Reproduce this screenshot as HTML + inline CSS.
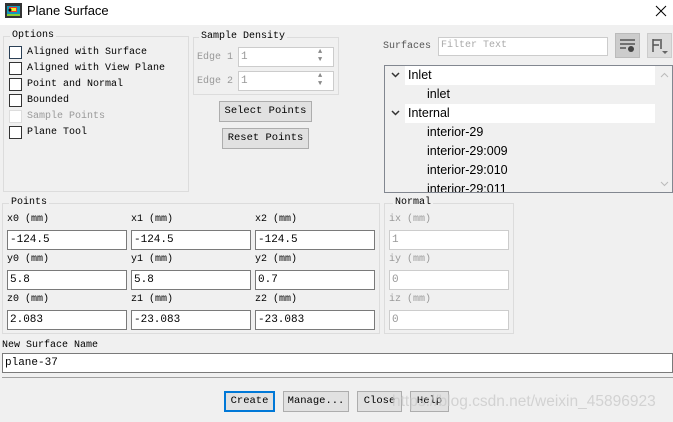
<!DOCTYPE html>
<html><head><style>
*{margin:0;padding:0;box-sizing:border-box}
body{width:673px;height:422px;background:#f0f0f0;position:relative;overflow:hidden;font-family:"Liberation Mono","Noto Sans CJK SC",monospace;font-size:10px;color:#000}
.a{position:absolute}
.tb{left:0;top:0;width:673px;height:25px;background:#fff}
.grp{position:absolute;border:1px solid #dcdcdc}
.lg{position:absolute;background:#f0f0f0;padding:0 2px;top:-7px;left:6px;line-height:12px}
.cb{position:absolute;width:13px;height:13px;border:1px solid #333;background:#fff}
.inp{position:absolute;background:#fff;border:1px solid #7a7a7a;height:20px;line-height:18px;padding-left:2px;font-size:11px}
.dis{border-color:#ccc;color:#999}
.btn{position:absolute;border:1px solid #adadad;background:#e1e1e1;text-align:center;line-height:18px;font-size:10.5px}
.row{position:absolute;left:0;width:270px;height:19px;line-height:19px;font-family:"Liberation Sans",sans-serif;font-size:12.5px}
</style></head><body>
<div class="a tb"></div>
<svg class="a" style="left:5px;top:3px" width="17" height="15"><rect x="0" y="0" width="17" height="15" fill="#333"/><rect x="2" y="3" width="13" height="8" fill="#19b"/><rect x="4" y="4" width="8" height="5" fill="#e33"/><rect x="6" y="5" width="5" height="3" fill="#ee2"/><circle cx="5" cy="7" r="1.5" fill="#111"/><rect x="2" y="11" width="13" height="2" fill="#8c3"/></svg>
<div class="a" style="left:27px;top:3px;font-family:'Liberation Sans',sans-serif;font-size:13px">Plane Surface</div>
<svg class="a" style="left:655px;top:5px" width="12" height="12"><path d="M1 1L11 11M11 1L1 11" stroke="#000" stroke-width="1"/></svg>

<div class="grp" style="left:3px;top:36px;width:186px;height:156px"><span class="lg">Options</span></div>
<div class="cb" style="left:9px;top:46px;border-color:#2a3f55"></div><div class="a" style="left:27px;top:47px">Aligned with Surface</div>
<div class="cb" style="left:9px;top:62px"></div><div class="a" style="left:27px;top:63px">Aligned with View Plane</div>
<div class="cb" style="left:9px;top:78px"></div><div class="a" style="left:27px;top:79px">Point and Normal</div>
<div class="cb" style="left:9px;top:94px"></div><div class="a" style="left:27px;top:95px">Bounded</div>
<div class="cb" style="left:9px;top:110px;border-color:#ddd"></div><div class="a" style="left:27px;top:111px;color:#999">Sample Points</div>
<div class="cb" style="left:9px;top:126px"></div><div class="a" style="left:27px;top:127px">Plane Tool</div>

<div class="grp" style="left:193px;top:37px;width:146px;height:58px"><span class="lg" style="left:5px">Sample Density</span></div>
<div class="a" style="left:197px;top:52px;color:#999">Edge 1</div>
<div class="inp dis" style="left:238px;top:47px;width:96px;height:20px">1</div>
<div class="a" style="left:318px;top:48px;color:#888;font-size:7px;line-height:8px">▲<br>▼</div>
<div class="a" style="left:197px;top:76px;color:#999">Edge 2</div>
<div class="inp dis" style="left:238px;top:71px;width:96px;height:20px">1</div>
<div class="a" style="left:318px;top:72px;color:#888;font-size:7px;line-height:8px">▲<br>▼</div>
<div class="btn" style="left:219px;top:101px;width:93px;height:21px">Select Points</div>
<div class="btn" style="left:222px;top:128px;width:87px;height:21px">Reset Points</div>

<div class="a" style="left:383px;top:41px;color:#555">Surfaces</div>
<div class="inp" style="left:438px;top:37px;width:170px;height:19px;line-height:16px;color:#aaa;font-size:10px;border-color:#ccc">Filter Text</div>
<div class="a" style="left:615px;top:33px;width:25px;height:25px;background:#ccc;border:1px solid #bbb"></div>
<svg class="a" style="left:618px;top:37px" width="20" height="18"><path d="M2 3H17M2 7H17M2 11H8" stroke="#555" stroke-width="1.5"/><circle cx="13" cy="12" r="3" fill="#444"/></svg>
<div class="a" style="left:647px;top:33px;width:25px;height:25px;background:#ddd;border:1px solid #ccc"></div>
<svg class="a" style="left:650px;top:37px" width="20" height="18"><path d="M3 2V15M3 3H10M3 8H9M11 2V12" stroke="#555" stroke-width="1.5" fill="none"/><path d="M12 14H18L15 17Z" fill="#666"/></svg>

<div class="a" style="left:384px;top:65px;width:289px;height:128px;border:1px solid #828790;background:#f0f0f0;overflow:hidden">
<div class="row" style="top:0;background:#fff;left:20px;padding-left:3px;width:250px">Inlet</div>
<svg class="a" style="left:6px;top:6px" width="9" height="6"><path d="M1 1L4.5 4.5L8 1" stroke="#333" stroke-width="1.5" fill="none"/></svg>
<div class="row" style="top:19px;padding-left:42px">inlet</div>
<div class="row" style="top:38px;background:#fff;left:20px;padding-left:3px;width:250px">Internal</div>
<svg class="a" style="left:6px;top:44px" width="9" height="6"><path d="M1 1L4.5 4.5L8 1" stroke="#333" stroke-width="1.5" fill="none"/></svg>
<div class="row" style="top:57px;padding-left:42px">interior-29</div>
<div class="row" style="top:76px;padding-left:42px">interior-29:009</div>
<div class="row" style="top:95px;padding-left:42px">interior-29:010</div>
<div class="row" style="top:114px;padding-left:42px">interior-29:011</div>
<div class="a" style="left:271px;top:0;width:17px;height:127px;background:#f0f0f0"></div>
<svg class="a" style="left:275px;top:6px" width="9" height="6"><path d="M1 5L4.5 1.5L8 5" stroke="#bbb" stroke-width="1" fill="none"/></svg>
<svg class="a" style="left:275px;top:115px" width="9" height="6"><path d="M1 1L4.5 4.5L8 1" stroke="#bbb" stroke-width="1" fill="none"/></svg>
</div>

<div class="grp" style="left:2px;top:203px;width:378px;height:131px"><span class="lg">Points</span></div>
<div class="grp" style="left:384px;top:203px;width:130px;height:131px"><span class="lg" style="left:8px">Normal</span></div>
<div class="a" style="left:7px;top:214px">x0 (mm)</div><div class="a" style="left:131px;top:214px">x1 (mm)</div><div class="a" style="left:255px;top:214px">x2 (mm)</div><div class="a" style="left:389px;top:214px;color:#999">ix (mm)</div>
<div class="inp" style="left:7px;top:230px;width:120px">-124.5</div><div class="inp" style="left:131px;top:230px;width:120px">-124.5</div><div class="inp" style="left:255px;top:230px;width:120px">-124.5</div><div class="inp dis" style="left:389px;top:230px;width:120px">1</div>
<div class="a" style="left:7px;top:254px">y0 (mm)</div><div class="a" style="left:131px;top:254px">y1 (mm)</div><div class="a" style="left:255px;top:254px">y2 (mm)</div><div class="a" style="left:389px;top:254px;color:#999">iy (mm)</div>
<div class="inp" style="left:7px;top:270px;width:120px">5.8</div><div class="inp" style="left:131px;top:270px;width:120px">5.8</div><div class="inp" style="left:255px;top:270px;width:120px">0.7</div><div class="inp dis" style="left:389px;top:270px;width:120px">0</div>
<div class="a" style="left:7px;top:294px">z0 (mm)</div><div class="a" style="left:131px;top:294px">z1 (mm)</div><div class="a" style="left:255px;top:294px">z2 (mm)</div><div class="a" style="left:389px;top:294px;color:#999">iz (mm)</div>
<div class="inp" style="left:7px;top:310px;width:120px">2.083</div><div class="inp" style="left:131px;top:310px;width:120px">-23.083</div><div class="inp" style="left:255px;top:310px;width:120px">-23.083</div><div class="inp dis" style="left:389px;top:310px;width:120px">0</div>

<div class="a" style="left:2px;top:340px">New Surface Name</div>
<div class="inp" style="left:2px;top:353px;width:671px;height:20px">plane-37</div>
<div class="a" style="left:2px;top:377px;width:671px;height:1px;background:#a0a0a0"></div>

<div class="btn" style="left:224px;top:391px;width:51px;height:21px;border:2px solid #0078d7;line-height:17px">Create</div>
<div class="btn" style="left:283px;top:391px;width:66px;height:21px">Manage...</div>
<div class="btn" style="left:357px;top:391px;width:45px;height:21px">Close</div>
<div class="btn" style="left:410px;top:391px;width:39px;height:21px">Help</div>
<div class="a" style="left:392px;top:393px;font-family:'Liberation Sans',sans-serif;font-size:15.5px;color:rgba(200,200,200,0.75);white-space:nowrap">https://blog.csdn.net/weixin_45896923</div>
</body></html>
